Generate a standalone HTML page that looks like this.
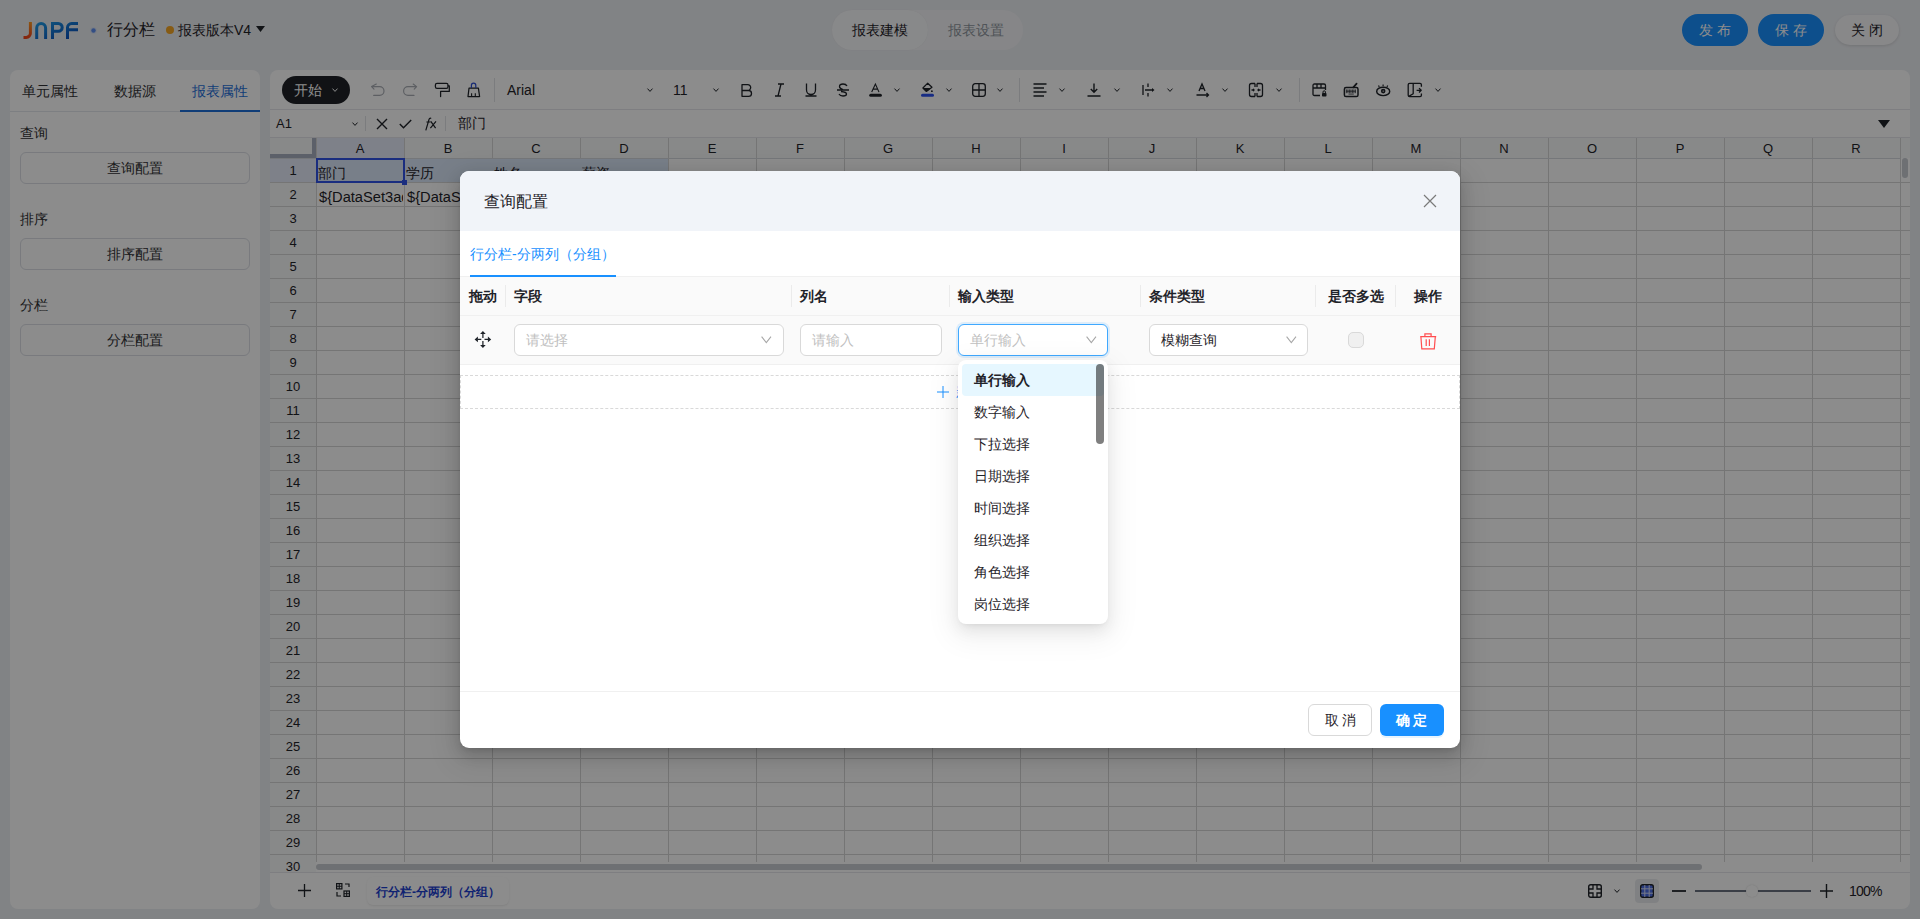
<!DOCTYPE html><html><head><meta charset="utf-8"><style>
*{box-sizing:border-box;margin:0;padding:0}
html,body{width:1920px;height:919px;overflow:hidden}
body{font-family:"Liberation Sans",sans-serif;font-size:14px;color:#303133;background:#eceef2;position:relative}
.abs{position:absolute}
.t{position:absolute;white-space:nowrap;line-height:1}
svg{position:absolute;overflow:visible}
</style></head><body>
<svg style="left:0;top:0" width="100" height="50" viewBox="0 0 100 50"><defs><linearGradient id="gj" x1="0" y1="0" x2="0" y2="1"><stop offset="0" stop-color="#ff9a1f"/><stop offset="1" stop-color="#f2461c"/></linearGradient><linearGradient id="gb" x1="0" y1="0" x2="1" y2="1"><stop offset="0" stop-color="#1f9be6"/><stop offset="1" stop-color="#0747b8"/></linearGradient></defs><path d="M30.4 22V33.2a4.2 4.2 0 0 1 -4.2 4.2H23.5" fill="none" stroke="url(#gj)" stroke-width="3"/><path d="M36.7 39V27.95a4.45 4.45 0 0 1 8.9 0V39M52.5 39V23.5H58.3a3.9 3.9 0 0 1 0 7.8H52.5M67.5 39V27.6a4.1 4.1 0 0 1 4.1 -4.1H78M67.5 29.8H78" fill="none" stroke="url(#gb)" stroke-width="3" gradientUnits="userSpaceOnUse"/><circle cx="93.5" cy="30.5" r="3.3" fill="#cfdcf5" opacity=".6"/><circle cx="93.5" cy="30.5" r="2.2" fill="#5d8ef0"/></svg>
<div class="t" style="left:107px;top:22px;font-size:16px;color:#1f2329">行分栏</div>
<div class="abs" style="left:166px;top:26px;width:8px;height:8px;border-radius:4px;background:#f5a623"></div>
<div class="t" style="left:178px;top:23px;font-size:14px;color:#1f2329">报表版本V4</div>
<svg style="left:256px;top:26px" width="9" height="7"><path d="M0 0H9L4.5 6Z" fill="#1f2329"/></svg>
<div class="abs" style="left:832px;top:10px;width:191px;height:40px;border-radius:20px;background:#f4f5f8"></div>
<div class="abs" style="left:832px;top:10px;width:96px;height:40px;border-radius:20px;background:#f8f9fb;box-shadow:0 0 1px rgba(0,0,0,.08)"></div>
<div class="t" style="left:852px;top:23px;color:#1f2329">报表建模</div>
<div class="t" style="left:948px;top:23px;color:#8f959e">报表设置</div>
<div class="abs" style="left:1682px;top:14px;width:66px;height:32px;border-radius:16px;background:#1890ff"></div>
<div class="t" style="left:1699px;top:23px;color:#fff;letter-spacing:4px">发布</div>
<div class="abs" style="left:1758px;top:14px;width:66px;height:32px;border-radius:16px;background:#1890ff"></div>
<div class="t" style="left:1775px;top:23px;color:#fff;letter-spacing:4px">保存</div>
<div class="abs" style="left:1835px;top:15px;width:64px;height:30px;border-radius:15px;background:#f7f8fa;box-shadow:0 1px 3px rgba(0,0,0,.12)"></div>
<div class="t" style="left:1851px;top:23px;color:#1f2329;letter-spacing:4px">关闭</div>
<div class="abs" style="left:10px;top:70px;width:250px;height:839px;border-radius:8px;background:#fff"></div>
<div class="abs" style="left:10px;top:111px;width:250px;height:1px;background:#e4e7ed"></div>
<div class="abs" style="left:180px;top:110px;width:80px;height:2px;background:#1e6fd9"></div>
<div class="t" style="left:22px;top:84px;color:#303133">单元属性</div>
<div class="t" style="left:114px;top:84px;color:#303133">数据源</div>
<div class="t" style="left:192px;top:84px;color:#1e6fd9">报表属性</div>
<div class="t" style="left:20px;top:126px;color:#303133">查询</div>
<div class="abs" style="left:20px;top:152px;width:230px;height:32px;border:1px solid #dcdfe6;border-radius:6px;background:#fff"></div>
<div class="t" style="left:107px;top:161px;color:#303133">查询配置</div>
<div class="t" style="left:20px;top:212px;color:#303133">排序</div>
<div class="abs" style="left:20px;top:238px;width:230px;height:32px;border:1px solid #dcdfe6;border-radius:6px;background:#fff"></div>
<div class="t" style="left:107px;top:247px;color:#303133">排序配置</div>
<div class="t" style="left:20px;top:298px;color:#303133">分栏</div>
<div class="abs" style="left:20px;top:324px;width:230px;height:32px;border:1px solid #dcdfe6;border-radius:6px;background:#fff"></div>
<div class="t" style="left:107px;top:333px;color:#303133">分栏配置</div>
<div class="abs" style="left:270px;top:70px;width:1640px;height:839px;border-radius:8px;background:#fff;overflow:hidden">
</div>
<div class="abs" style="left:270px;top:109px;width:1640px;height:1px;background:#e5e6eb"></div>
<div class="abs" style="left:270px;top:137px;width:1640px;height:1px;background:#e5e6eb"></div>
<div class="abs" style="left:282px;top:76px;width:68px;height:28px;border-radius:14px;background:#1f2227"></div>
<div class="t" style="left:294px;top:83px;color:#fff">开始</div>
<svg style="left:332px;top:88px" width="6" height="4"><path d="M0.5 0.6L3.0 3.4L5.5 0.6" fill="none" stroke="#fff" stroke-width="1"/></svg>
<svg style="left:364px;top:76px" width="124" height="28" viewBox="0 0 124 28"><path d="M12.3 8L7.6 10.6L10 13.2M7.8 10.6H15.6A4.4 4.4 0 0 1 15.6 19.4H9.7" fill="none" stroke="#a9adb4" stroke-width="1.15" stroke-linecap="round" stroke-linejoin="round"/><path d="M49.2 8L52.6 10.6L50.2 13.2M52.4 10.6H44A4.4 4.4 0 0 0 44 19.4H50" fill="none" stroke="#a9adb4" stroke-width="1.15" stroke-linecap="round" stroke-linejoin="round"/><rect x="71.4" y="7.4" width="12.6" height="4.9" rx="1.6" fill="none" stroke="#1f2329" stroke-width="1.25"/><path d="M84 9.8H85.3V15.4H76.6V20.6" fill="none" stroke="#1f2329" stroke-width="1.25" stroke-linecap="round" stroke-linejoin="round"/><path d="M105 12.2H114.4L115.6 20.5H104Z" fill="none" stroke="#1f2329" stroke-width="1.25" stroke-linejoin="round"/><path d="M107.6 17.3V20.5M111.3 17.3V20.5" stroke="#1f2329" stroke-width="1.1"/><path d="M107.4 12V9.4a2.2 2.2 0 0 1 4.4 0V12" fill="none" stroke="#2d4fd6" stroke-width="1.2"/></svg>
<div class="abs" style="left:494px;top:78px;width:1px;height:24px;background:#e0e2e6"></div>
<div class="t" style="left:507px;top:83px;font-size:14px;color:#1f2329">Arial</div>
<svg style="left:647px;top:88px" width="6" height="4"><path d="M0.5 0.6L3.0 3.4L5.5 0.6" fill="none" stroke="#1f2329" stroke-width="1"/></svg>
<div class="t" style="left:673px;top:83px;font-size:14px;color:#1f2329">11</div>
<svg style="left:713px;top:88px" width="6" height="4"><path d="M0.5 0.6L3.0 3.4L5.5 0.6" fill="none" stroke="#1f2329" stroke-width="1"/></svg>
<svg style="left:741px;top:84px" width="13" height="13" viewBox="0 0 13 13"><path d="M1 0.7H6.8a2.9 2.9 0 0 1 0 5.8H1ZM1 6.5H7.6a2.9 2.9 0 0 1 0 5.8H1Z" fill="none" stroke="#1f2329" stroke-width="1.3" stroke-linejoin="round"/></svg>
<svg style="left:774px;top:83px" width="11" height="14" viewBox="0 0 11 14"><path d="M4 1H10M1 13H7M7 1L4 13" fill="none" stroke="#1f2329" stroke-width="1.3"/></svg>
<svg style="left:805px;top:83px" width="12" height="14" viewBox="0 0 12 14"><path d="M1.5 0.5V7a4.5 4.5 0 0 0 9 0V0.5M0.5 13H11.5" fill="none" stroke="#1f2329" stroke-width="1.3"/></svg>
<svg style="left:837px;top:83px" width="12" height="14" viewBox="0 0 12 14"><path d="M10 3Q9 1 6 1Q2.5 1 2.5 3.5Q2.5 5.5 6 6.5M4 8.5Q9.5 9 9.5 11Q9.5 13 6 13Q3 13 2 11M0 7H12" fill="none" stroke="#1f2329" stroke-width="1.3"/></svg>
<svg style="left:869px;top:83px" width="14" height="15" viewBox="0 0 14 15"><path d="M2.7 9.1L6.4 1L10 9.1M4 6.1H8.8" fill="none" stroke="#1f2329" stroke-width="1.1"/><rect x="0.2" y="10.7" width="12.7" height="3.1" rx="1.5" fill="#1f2329"/></svg>
<svg style="left:894px;top:88px" width="6" height="4"><path d="M0.5 0.6L3.0 3.4L5.5 0.6" fill="none" stroke="#1f2329" stroke-width="1"/></svg>
<svg style="left:921px;top:82px" width="14" height="16" viewBox="0 0 14 16"><path d="M6.7 1.2L11 5.2L5.4 9.5L1.9 6Z" fill="none" stroke="#1f2329" stroke-width="1.2" stroke-linejoin="round"/><path d="M1.9 6.1L9.9 6.1L5.4 9.6Z" fill="#1f2329"/><circle cx="10.9" cy="9.2" r="0.9" fill="#1f2329"/><rect x="0" y="11.7" width="13" height="3.1" rx="1.5" fill="#2b50f0"/></svg>
<svg style="left:946px;top:88px" width="6" height="4"><path d="M0.5 0.6L3.0 3.4L5.5 0.6" fill="none" stroke="#1f2329" stroke-width="1"/></svg>
<svg style="left:972px;top:83px" width="14" height="14" viewBox="0 0 14 14"><rect x="0.7" y="0.7" width="12.6" height="12.6" rx="2.5" fill="none" stroke="#1f2329" stroke-width="1.3"/><path d="M7 1V13M1 7H13" stroke="#1f2329" stroke-width="1.3"/></svg>
<svg style="left:997px;top:88px" width="6" height="4"><path d="M0.5 0.6L3.0 3.4L5.5 0.6" fill="none" stroke="#1f2329" stroke-width="1"/></svg>
<div class="abs" style="left:1019px;top:78px;width:1px;height:24px;background:#e0e2e6"></div>
<svg style="left:1033px;top:83px" width="14" height="14" viewBox="0 0 14 14"><path d="M0.5 1H13.5M0.5 5H11M0.5 9H13.5M0.5 13H11" stroke="#1f2329" stroke-width="1.3"/></svg>
<svg style="left:1059px;top:88px" width="6" height="4"><path d="M0.5 0.6L3.0 3.4L5.5 0.6" fill="none" stroke="#1f2329" stroke-width="1"/></svg>
<svg style="left:1087px;top:83px" width="14" height="14" viewBox="0 0 14 14"><path d="M7 0.5V9M3.8 6L7 9.3L10.2 6M0.5 13H13.5" fill="none" stroke="#1f2329" stroke-width="1.4"/></svg>
<svg style="left:1114px;top:88px" width="6" height="4"><path d="M0.5 0.6L3.0 3.4L5.5 0.6" fill="none" stroke="#1f2329" stroke-width="1"/></svg>
<svg style="left:1142px;top:83px" width="13" height="14" viewBox="0 0 13 14"><path d="M1 2V12M6 0.5V4M6 10V13.5M3 7H11" fill="none" stroke="#1f2329" stroke-width="1.3"/><path d="M10 5L12.5 7L10 9Z" fill="#1f2329"/></svg>
<svg style="left:1167px;top:88px" width="6" height="4"><path d="M0.5 0.6L3.0 3.4L5.5 0.6" fill="none" stroke="#1f2329" stroke-width="1"/></svg>
<svg style="left:1196px;top:83px" width="14" height="15" viewBox="0 0 14 15"><path d="M3 8L6 1L9 8M4 5.5H8M0.5 12H12.5M10.5 10L12.5 12L10.5 14" fill="none" stroke="#1f2329" stroke-width="1.3"/></svg>
<svg style="left:1222px;top:88px" width="6" height="4"><path d="M0.5 0.6L3.0 3.4L5.5 0.6" fill="none" stroke="#1f2329" stroke-width="1"/></svg>
<svg style="left:1248px;top:82px" width="16" height="16" viewBox="0 0 16 16"><path d="M7 1.5H3.5Q1.5 1.5 1.5 3.5V12.5Q1.5 14.5 3.5 14.5H7M7 1.5V5M7 11V14.5M9 1.5H12.5Q14.5 1.5 14.5 3.5V12.5Q14.5 14.5 12.5 14.5H9M9 1.5V5M9 11V14.5M3.5 8H6M10 8H12.5" fill="none" stroke="#1f2329" stroke-width="1.3"/><path d="M7 8L5 6.3V9.7ZM9 8L11 6.3V9.7Z" fill="#1f2329"/></svg>
<svg style="left:1276px;top:88px" width="6" height="4"><path d="M0.5 0.6L3.0 3.4L5.5 0.6" fill="none" stroke="#1f2329" stroke-width="1"/></svg>
<div class="abs" style="left:1299px;top:78px;width:1px;height:24px;background:#e0e2e6"></div>
<svg style="left:1312px;top:83px" width="15" height="14" viewBox="0 0 15 14"><path d="M8 12.5H2.5Q1 12.5 1 11V2.5Q1 1 2.5 1H12Q13.5 1 13.5 2.5V7M1 5H13.5M5 1V5M9 1V5" fill="none" stroke="#1f2329" stroke-width="1.3"/><rect x="10" y="10" width="4.5" height="3.5" rx="0.8" fill="#1f2329"/><path d="M11 10V9a1.2 1.2 0 0 1 2.4 0V10" fill="none" stroke="#1f2329" stroke-width="1"/></svg>
<svg style="left:1343px;top:81px" width="17" height="17" viewBox="0 0 17 17"><rect x="1.4" y="6.6" width="13.6" height="9" rx="1.6" fill="none" stroke="#1f2329" stroke-width="1.5"/><path d="M3.4 8.4V12.2M4.9 8.4V12.2M6.4 8.4V12.2M7.9 8.4V12.2M9.4 8.4V12.2M10.9 8.4V12.2M12.4 8.4V12.2M3.2 10.2H12.8M5.5 13.1H10.8" stroke="#1f2329" stroke-width="0.75"/><path d="M10.3 6.4L13.6 2.6" stroke="#1f2329" stroke-width="1.7" stroke-linecap="round"/></svg>
<svg style="left:1375px;top:82px" width="16" height="16" viewBox="0 0 16 16"><ellipse cx="8.2" cy="9.4" rx="6.5" ry="4.2" fill="none" stroke="#1f2329" stroke-width="1.45"/><circle cx="8.2" cy="9.1" r="1.5" fill="none" stroke="#1f2329" stroke-width="1.6"/><path d="M4.3 4.9L3.5 3.5M8.1 4.2V2.4M11.9 4.9L12.7 3.5" stroke="#1f2329" stroke-width="1.2"/></svg>
<svg style="left:1407px;top:82px" width="16" height="16" viewBox="0 0 16 16"><path d="M14.4 4.8V2.8Q14.4 1.4 13 1.4H2.6Q1.2 1.4 1.2 2.8V13.2Q1.2 14.6 2.6 14.6H13Q14.4 14.6 14.4 13.2V11.4M6.2 1.4V11.8L1.8 14.4M9.6 8.3H14.2M12 6.1L14.2 8.3L12 10.5" fill="none" stroke="#1f2329" stroke-width="1.3" stroke-linejoin="round"/></svg>
<svg style="left:1435px;top:88px" width="6" height="4"><path d="M0.5 0.6L3.0 3.4L5.5 0.6" fill="none" stroke="#1f2329" stroke-width="1"/></svg>
<div class="t" style="left:276px;top:117px;font-size:13px;color:#1f2329">A1</div>
<svg style="left:352px;top:122px" width="6" height="4"><path d="M0.5 0.6L3.0 3.4L5.5 0.6" fill="none" stroke="#1f2329" stroke-width="1"/></svg>
<div class="abs" style="left:365px;top:116px;width:1px;height:15px;background:#e0e2e6"></div>
<svg style="left:376px;top:118px" width="12" height="12" viewBox="0 0 12 12"><path d="M1 1L11 11M11 1L1 11" stroke="#1f2329" stroke-width="1.4"/></svg>
<svg style="left:399px;top:119px" width="13" height="10" viewBox="0 0 13 10"><path d="M0.8 5L4.5 8.8L12.2 1" fill="none" stroke="#1f2329" stroke-width="1.4"/></svg>
<svg style="left:422px;top:116px" width="16" height="16" viewBox="0 0 16 16"><path d="M9.2 2.4Q7.8 1.6 7 3.5L3.8 14.4M4.4 6H8.4M8.8 5.4L13.6 12.2M14 5.4L8.4 12.2" fill="none" stroke="#1f2329" stroke-width="1.2"/></svg>
<div class="abs" style="left:445px;top:116px;width:1px;height:15px;background:#e0e2e6"></div>
<div class="t" style="left:458px;top:116px;font-size:14px;color:#1f2329">部门</div>
<svg style="left:1878px;top:120px" width="12" height="8"><path d="M0 0H12L6 8Z" fill="#1f2329"/></svg>
<div class="abs" style="left:270px;top:138px;width:1640px;height:20px;background:#f8f9fa"></div>
<div class="abs" style="left:270px;top:158px;width:46px;height:714px;background:#f8f9fa"></div>
<div class="abs" style="left:316px;top:138px;width:88px;height:20px;background:#e6ebfa"></div>
<div class="abs" style="left:270px;top:158px;width:46px;height:24px;background:#e6ebfa"></div>
<div class="abs" style="left:316px;top:158px;width:352px;height:24px;background:#dbe8f9"></div>
<div class="abs" style="left:316px;top:138px;width:1px;height:724px;background:#d6d6d6"></div>
<div class="abs" style="left:404px;top:138px;width:1px;height:20px;background:#d6d6d6"></div>
<div class="abs" style="left:404px;top:182px;width:1px;height:680px;background:#d6d6d6"></div>
<div class="abs" style="left:492px;top:138px;width:1px;height:20px;background:#d6d6d6"></div>
<div class="abs" style="left:492px;top:182px;width:1px;height:680px;background:#d6d6d6"></div>
<div class="abs" style="left:580px;top:138px;width:1px;height:20px;background:#d6d6d6"></div>
<div class="abs" style="left:580px;top:182px;width:1px;height:680px;background:#d6d6d6"></div>
<div class="abs" style="left:668px;top:138px;width:1px;height:724px;background:#d6d6d6"></div>
<div class="abs" style="left:756px;top:138px;width:1px;height:724px;background:#d6d6d6"></div>
<div class="abs" style="left:844px;top:138px;width:1px;height:724px;background:#d6d6d6"></div>
<div class="abs" style="left:932px;top:138px;width:1px;height:724px;background:#d6d6d6"></div>
<div class="abs" style="left:1020px;top:138px;width:1px;height:724px;background:#d6d6d6"></div>
<div class="abs" style="left:1108px;top:138px;width:1px;height:724px;background:#d6d6d6"></div>
<div class="abs" style="left:1196px;top:138px;width:1px;height:724px;background:#d6d6d6"></div>
<div class="abs" style="left:1284px;top:138px;width:1px;height:724px;background:#d6d6d6"></div>
<div class="abs" style="left:1372px;top:138px;width:1px;height:724px;background:#d6d6d6"></div>
<div class="abs" style="left:1460px;top:138px;width:1px;height:724px;background:#d6d6d6"></div>
<div class="abs" style="left:1548px;top:138px;width:1px;height:724px;background:#d6d6d6"></div>
<div class="abs" style="left:1636px;top:138px;width:1px;height:724px;background:#d6d6d6"></div>
<div class="abs" style="left:1724px;top:138px;width:1px;height:724px;background:#d6d6d6"></div>
<div class="abs" style="left:1812px;top:138px;width:1px;height:724px;background:#d6d6d6"></div>
<div class="abs" style="left:1900px;top:138px;width:1px;height:724px;background:#d6d6d6"></div>
<div class="abs" style="left:270px;top:182px;width:1640px;height:1px;background:#d6d6d6"></div>
<div class="abs" style="left:270px;top:206px;width:1640px;height:1px;background:#d6d6d6"></div>
<div class="abs" style="left:270px;top:230px;width:1640px;height:1px;background:#d6d6d6"></div>
<div class="abs" style="left:270px;top:254px;width:1640px;height:1px;background:#d6d6d6"></div>
<div class="abs" style="left:270px;top:278px;width:1640px;height:1px;background:#d6d6d6"></div>
<div class="abs" style="left:270px;top:302px;width:1640px;height:1px;background:#d6d6d6"></div>
<div class="abs" style="left:270px;top:326px;width:1640px;height:1px;background:#d6d6d6"></div>
<div class="abs" style="left:270px;top:350px;width:1640px;height:1px;background:#d6d6d6"></div>
<div class="abs" style="left:270px;top:374px;width:1640px;height:1px;background:#d6d6d6"></div>
<div class="abs" style="left:270px;top:398px;width:1640px;height:1px;background:#d6d6d6"></div>
<div class="abs" style="left:270px;top:422px;width:1640px;height:1px;background:#d6d6d6"></div>
<div class="abs" style="left:270px;top:446px;width:1640px;height:1px;background:#d6d6d6"></div>
<div class="abs" style="left:270px;top:470px;width:1640px;height:1px;background:#d6d6d6"></div>
<div class="abs" style="left:270px;top:494px;width:1640px;height:1px;background:#d6d6d6"></div>
<div class="abs" style="left:270px;top:518px;width:1640px;height:1px;background:#d6d6d6"></div>
<div class="abs" style="left:270px;top:542px;width:1640px;height:1px;background:#d6d6d6"></div>
<div class="abs" style="left:270px;top:566px;width:1640px;height:1px;background:#d6d6d6"></div>
<div class="abs" style="left:270px;top:590px;width:1640px;height:1px;background:#d6d6d6"></div>
<div class="abs" style="left:270px;top:614px;width:1640px;height:1px;background:#d6d6d6"></div>
<div class="abs" style="left:270px;top:638px;width:1640px;height:1px;background:#d6d6d6"></div>
<div class="abs" style="left:270px;top:662px;width:1640px;height:1px;background:#d6d6d6"></div>
<div class="abs" style="left:270px;top:686px;width:1640px;height:1px;background:#d6d6d6"></div>
<div class="abs" style="left:270px;top:710px;width:1640px;height:1px;background:#d6d6d6"></div>
<div class="abs" style="left:270px;top:734px;width:1640px;height:1px;background:#d6d6d6"></div>
<div class="abs" style="left:270px;top:758px;width:1640px;height:1px;background:#d6d6d6"></div>
<div class="abs" style="left:270px;top:782px;width:1640px;height:1px;background:#d6d6d6"></div>
<div class="abs" style="left:270px;top:806px;width:1640px;height:1px;background:#d6d6d6"></div>
<div class="abs" style="left:270px;top:830px;width:1640px;height:1px;background:#d6d6d6"></div>
<div class="abs" style="left:270px;top:854px;width:1640px;height:1px;background:#d6d6d6"></div>
<div class="abs" style="left:270px;top:158px;width:1630px;height:1px;background:#d6d9de"></div>
<div class="abs" style="left:312px;top:138px;width:4px;height:20px;background:#a8b0c0"></div>
<div class="abs" style="left:270px;top:154px;width:46px;height:4px;background:#a8b0c0"></div>
<div class="t" style="left:340.0px;width:40px;text-align:center;top:142px;font-size:13px;color:#1f2329">A</div>
<div class="t" style="left:428.0px;width:40px;text-align:center;top:142px;font-size:13px;color:#1f2329">B</div>
<div class="t" style="left:516.0px;width:40px;text-align:center;top:142px;font-size:13px;color:#1f2329">C</div>
<div class="t" style="left:604.0px;width:40px;text-align:center;top:142px;font-size:13px;color:#1f2329">D</div>
<div class="t" style="left:692.0px;width:40px;text-align:center;top:142px;font-size:13px;color:#1f2329">E</div>
<div class="t" style="left:780.0px;width:40px;text-align:center;top:142px;font-size:13px;color:#1f2329">F</div>
<div class="t" style="left:868.0px;width:40px;text-align:center;top:142px;font-size:13px;color:#1f2329">G</div>
<div class="t" style="left:956.0px;width:40px;text-align:center;top:142px;font-size:13px;color:#1f2329">H</div>
<div class="t" style="left:1044.0px;width:40px;text-align:center;top:142px;font-size:13px;color:#1f2329">I</div>
<div class="t" style="left:1132.0px;width:40px;text-align:center;top:142px;font-size:13px;color:#1f2329">J</div>
<div class="t" style="left:1220.0px;width:40px;text-align:center;top:142px;font-size:13px;color:#1f2329">K</div>
<div class="t" style="left:1308.0px;width:40px;text-align:center;top:142px;font-size:13px;color:#1f2329">L</div>
<div class="t" style="left:1396.0px;width:40px;text-align:center;top:142px;font-size:13px;color:#1f2329">M</div>
<div class="t" style="left:1484.0px;width:40px;text-align:center;top:142px;font-size:13px;color:#1f2329">N</div>
<div class="t" style="left:1572.0px;width:40px;text-align:center;top:142px;font-size:13px;color:#1f2329">O</div>
<div class="t" style="left:1660.0px;width:40px;text-align:center;top:142px;font-size:13px;color:#1f2329">P</div>
<div class="t" style="left:1748.0px;width:40px;text-align:center;top:142px;font-size:13px;color:#1f2329">Q</div>
<div class="t" style="left:1836.0px;width:40px;text-align:center;top:142px;font-size:13px;color:#1f2329">R</div>
<div class="t" style="left:270px;width:46px;text-align:center;top:164px;font-size:13px;color:#1f2329">1</div>
<div class="t" style="left:270px;width:46px;text-align:center;top:188px;font-size:13px;color:#1f2329">2</div>
<div class="t" style="left:270px;width:46px;text-align:center;top:212px;font-size:13px;color:#1f2329">3</div>
<div class="t" style="left:270px;width:46px;text-align:center;top:236px;font-size:13px;color:#1f2329">4</div>
<div class="t" style="left:270px;width:46px;text-align:center;top:260px;font-size:13px;color:#1f2329">5</div>
<div class="t" style="left:270px;width:46px;text-align:center;top:284px;font-size:13px;color:#1f2329">6</div>
<div class="t" style="left:270px;width:46px;text-align:center;top:308px;font-size:13px;color:#1f2329">7</div>
<div class="t" style="left:270px;width:46px;text-align:center;top:332px;font-size:13px;color:#1f2329">8</div>
<div class="t" style="left:270px;width:46px;text-align:center;top:356px;font-size:13px;color:#1f2329">9</div>
<div class="t" style="left:270px;width:46px;text-align:center;top:380px;font-size:13px;color:#1f2329">10</div>
<div class="t" style="left:270px;width:46px;text-align:center;top:404px;font-size:13px;color:#1f2329">11</div>
<div class="t" style="left:270px;width:46px;text-align:center;top:428px;font-size:13px;color:#1f2329">12</div>
<div class="t" style="left:270px;width:46px;text-align:center;top:452px;font-size:13px;color:#1f2329">13</div>
<div class="t" style="left:270px;width:46px;text-align:center;top:476px;font-size:13px;color:#1f2329">14</div>
<div class="t" style="left:270px;width:46px;text-align:center;top:500px;font-size:13px;color:#1f2329">15</div>
<div class="t" style="left:270px;width:46px;text-align:center;top:524px;font-size:13px;color:#1f2329">16</div>
<div class="t" style="left:270px;width:46px;text-align:center;top:548px;font-size:13px;color:#1f2329">17</div>
<div class="t" style="left:270px;width:46px;text-align:center;top:572px;font-size:13px;color:#1f2329">18</div>
<div class="t" style="left:270px;width:46px;text-align:center;top:596px;font-size:13px;color:#1f2329">19</div>
<div class="t" style="left:270px;width:46px;text-align:center;top:620px;font-size:13px;color:#1f2329">20</div>
<div class="t" style="left:270px;width:46px;text-align:center;top:644px;font-size:13px;color:#1f2329">21</div>
<div class="t" style="left:270px;width:46px;text-align:center;top:668px;font-size:13px;color:#1f2329">22</div>
<div class="t" style="left:270px;width:46px;text-align:center;top:692px;font-size:13px;color:#1f2329">23</div>
<div class="t" style="left:270px;width:46px;text-align:center;top:716px;font-size:13px;color:#1f2329">24</div>
<div class="t" style="left:270px;width:46px;text-align:center;top:740px;font-size:13px;color:#1f2329">25</div>
<div class="t" style="left:270px;width:46px;text-align:center;top:764px;font-size:13px;color:#1f2329">26</div>
<div class="t" style="left:270px;width:46px;text-align:center;top:788px;font-size:13px;color:#1f2329">27</div>
<div class="t" style="left:270px;width:46px;text-align:center;top:812px;font-size:13px;color:#1f2329">28</div>
<div class="t" style="left:270px;width:46px;text-align:center;top:836px;font-size:13px;color:#1f2329">29</div>
<div class="t" style="left:270px;width:46px;text-align:center;top:860px;font-size:13px;color:#1f2329">30</div>
<div class="t" style="left:318px;top:167px;font-size:13.5px;color:#1f2329">部门</div>
<div class="t" style="left:406px;top:167px;font-size:13.5px;color:#1f2329">学历</div>
<div class="t" style="left:494px;top:167px;font-size:13.5px;color:#1f2329">姓名</div>
<div class="t" style="left:582px;top:167px;font-size:13.5px;color:#1f2329">薪资</div>
<div class="abs" style="left:318px;top:189px;width:85px;height:18px;overflow:hidden"><div class="t" style="left:1px;top:1px;font-size:14.67px;color:#1f2329">${DataSet3ad.dept}</div></div>
<div class="abs" style="left:406px;top:189px;width:85px;height:18px;overflow:hidden"><div class="t" style="left:1px;top:1px;font-size:14.67px;color:#1f2329">${DataSet3abc.edu}</div></div>
<div class="abs" style="left:316px;top:158px;width:89px;height:25px;border:2px solid #3152e8"></div>
<div class="abs" style="left:402px;top:180px;width:5px;height:5px;background:#3152e8"></div>
<div class="abs" style="left:316px;top:864px;width:1386px;height:6px;border-radius:3px;background:#c9ccd1"></div>
<div class="abs" style="left:1902px;top:158px;width:6px;height:20px;border-radius:3px;background:#c9ccd1"></div>
<div class="abs" style="left:270px;top:872px;width:1640px;height:1px;background:#e5e6eb"></div>
<svg style="left:298px;top:884px" width="13" height="13" viewBox="0 0 13 13"><path d="M6.5 0V13M0 6.5H13" stroke="#1f2329" stroke-width="1.3"/></svg>
<svg style="left:336px;top:883px" width="14" height="14" viewBox="0 0 14 14"><rect x="0.6" y="0.6" width="5.3" height="5.3" fill="none" stroke="#1f2329" stroke-width="1.2"/><path d="M3.25 0.6V5.9M0.6 3.25H5.9" stroke="#1f2329" stroke-width="1"/><rect x="8" y="8" width="5.4" height="5.4" fill="none" stroke="#1f2329" stroke-width="1.2"/><path d="M10.7 8V13.4M8 10.7H13.4" stroke="#1f2329" stroke-width="1"/><path d="M9 1H13V4M1 9V13H5" fill="none" stroke="#1f2329" stroke-width="1.2"/></svg>
<div class="abs" style="left:367px;top:877px;width:142px;height:28px;border-radius:6px;background:#fff;box-shadow:0 1px 2px rgba(0,0,0,.08)"></div>
<div class="t" style="left:376px;top:886px;font-size:12px;font-weight:bold;color:#1d3fcf">行分栏-分两列（分组）</div>
<svg style="left:1588px;top:884px" width="14" height="14" viewBox="0 0 14 14"><rect x="0.7" y="0.7" width="12.6" height="12.6" rx="2" fill="none" stroke="#1f2329" stroke-width="1.4"/><path d="M5 1V5H1M9 1V5H13M5 13V9H1M9 13V9H13" fill="none" stroke="#1f2329" stroke-width="1.3"/></svg>
<svg style="left:1614px;top:889px" width="6" height="4"><path d="M0.5 0.6L3.0 3.4L5.5 0.6" fill="none" stroke="#1f2329" stroke-width="1"/></svg>
<div class="abs" style="left:1635px;top:879px;width:24px;height:24px;border-radius:4px;background:#eaecef"></div>
<svg style="left:1640px;top:884px" width="14" height="14" viewBox="0 0 14 14"><rect x="0.7" y="0.7" width="12.6" height="12.6" rx="2" fill="#4d6de6" stroke="#1f2329" stroke-width="1.4"/><path d="M4.8 1V13M9.2 1V13M1 4.8H13M1 9.2H13" stroke="#d5ddf7" stroke-width="1"/></svg>
<div class="abs" style="left:1672px;top:890px;width:14px;height:2px;background:#3a3d42"></div>
<div class="abs" style="left:1695px;top:890px;width:116px;height:2px;background:#6b7280"></div>
<div class="abs" style="left:1746px;top:885px;width:12px;height:12px;border-radius:6px;background:#fff;box-shadow:0 0 2px rgba(0,0,0,.15)"></div>
<svg style="left:1820px;top:884px" width="13" height="14" viewBox="0 0 13 14"><path d="M6.5 0V14M0 7H13" stroke="#1f2329" stroke-width="1.4"/></svg>
<div class="t" style="left:1849px;top:884px;font-size:14px;letter-spacing:-0.8px;color:#1f2329">100%</div>
<div class="abs" style="left:0;top:0;width:1920px;height:919px;background:rgba(0,0,0,.45)"></div>
<div class="abs" style="left:460px;top:171px;width:1000px;height:577px;border-radius:9px;background:#fff;overflow:hidden;box-shadow:0 6px 16px rgba(0,0,0,.16),0 3px 6px -4px rgba(0,0,0,.2),0 9px 28px 8px rgba(0,0,0,.08)">
<div class="abs" style="left:0;top:0;width:1000px;height:60px;background:#f1f4f9"></div>
<div class="t" style="left:24px;top:23px;font-size:16px;color:#1f2329">查询配置</div>
<svg style="left:963px;top:23px" width="14" height="14" viewBox="0 0 14 14"><path d="M1 1L13 13M13 1L1 13" stroke="#7a7a7a" stroke-width="1.2"/></svg>
<div class="t" style="left:10px;top:76px;font-size:14px;color:#1890ff">行分栏-分两列（分组）</div>
<div class="abs" style="left:0;top:105px;width:1000px;height:1px;background:#f0f0f0"></div>
<div class="abs" style="left:10px;top:104px;width:146px;height:2px;background:#1890ff"></div>
<div class="abs" style="left:0;top:106px;width:1000px;height:39px;background:#fafafa;border-bottom:1px solid #f0f0f0"></div>
<div class="abs" style="left:45px;top:114px;width:1px;height:22px;background:#ebebeb"></div>
<div class="abs" style="left:331px;top:114px;width:1px;height:22px;background:#ebebeb"></div>
<div class="abs" style="left:489px;top:114px;width:1px;height:22px;background:#ebebeb"></div>
<div class="abs" style="left:680px;top:114px;width:1px;height:22px;background:#ebebeb"></div>
<div class="abs" style="left:855px;top:114px;width:1px;height:22px;background:#ebebeb"></div>
<div class="abs" style="left:935px;top:114px;width:1px;height:22px;background:#ebebeb"></div>
<div class="t" style="left:9px;top:118px;font-size:14px;font-weight:bold;color:#1f2329">拖动</div>
<div class="t" style="left:54px;top:118px;font-size:14px;font-weight:bold;color:#1f2329">字段</div>
<div class="t" style="left:340px;top:118px;font-size:14px;font-weight:bold;color:#1f2329">列名</div>
<div class="t" style="left:498px;top:118px;font-size:14px;font-weight:bold;color:#1f2329">输入类型</div>
<div class="t" style="left:689px;top:118px;font-size:14px;font-weight:bold;color:#1f2329">条件类型</div>
<div class="t" style="left:868px;top:118px;font-size:14px;font-weight:bold;color:#1f2329">是否多选</div>
<div class="t" style="left:954px;top:118px;font-size:14px;font-weight:bold;color:#1f2329">操作</div>
<div class="abs" style="left:0;top:145px;width:1000px;height:49px;background:#fafafa;border-bottom:1px solid #f0f0f0"></div>
<svg style="left:10px;top:157px" width="26" height="24" viewBox="0 0 26 24"><path d="M12.9 5.4V9.9M12.9 12.9V17.4M7.6 11.4H11.3M14.5 11.4H18.2" stroke="#1f2329" stroke-width="1.25"/><path d="M10.1 5.9L12.9 2.9L15.7 5.9ZM10.1 16.9L12.9 19.9L15.7 16.9ZM7.9 8.6L4.6 11.4L7.9 14.2ZM17.9 8.6L21.2 11.4L17.9 14.2Z" fill="#1f2329"/></svg>
<div class="abs" style="left:54px;top:153px;width:270px;height:32px;border:1px solid #d9d9d9;border-radius:6px;background:#fff"></div>
<div class="t" style="left:66px;top:162px;font-size:14px;color:#bfbfbf">请选择</div>
<svg style="left:301px;top:165px" width="11" height="8" viewBox="0 0 11 8"><path d="M0.6 0.6L5.3 6.6L10 0.6" fill="none" stroke="#a6a6a6" stroke-width="1.05"/></svg>
<div class="abs" style="left:340px;top:153px;width:142px;height:32px;border:1px solid #d9d9d9;border-radius:6px;background:#fff"></div>
<div class="t" style="left:352px;top:162px;font-size:14px;color:#bfbfbf">请输入</div>
<div class="abs" style="left:498px;top:153px;width:150px;height:32px;border:1px solid #40a9ff;border-radius:6px;background:#fff;box-shadow:0 0 0 2px rgba(24,144,255,.12)"></div>
<div class="t" style="left:510px;top:162px;font-size:14px;color:#bfbfbf">单行输入</div>
<svg style="left:626px;top:165px" width="11" height="8" viewBox="0 0 11 8"><path d="M0.6 0.6L5.3 6.6L10 0.6" fill="none" stroke="#a6a6a6" stroke-width="1.05"/></svg>
<div class="abs" style="left:689px;top:153px;width:159px;height:32px;border:1px solid #d9d9d9;border-radius:6px;background:#fff"></div>
<div class="t" style="left:701px;top:162px;font-size:14px;color:#1f2329">模糊查询</div>
<svg style="left:826px;top:165px" width="11" height="8" viewBox="0 0 11 8"><path d="M0.6 0.6L5.3 6.6L10 0.6" fill="none" stroke="#a6a6a6" stroke-width="1.05"/></svg>
<div class="abs" style="left:888px;top:161px;width:16px;height:16px;border:1px solid #d9d9d9;border-radius:5px;background:#f0f0f0"></div>
<svg style="left:960px;top:162px" width="17" height="17" viewBox="0 0 17 17"><path d="M4.9 3.4V0.9H11.1V3.4M0.2 3.7H16.2M0.9 3.7L1.8 15.8H14.3L15.3 3.7M6.2 6.3V12.9M9.4 6.3V12.9" fill="none" stroke="#ff4d4f" stroke-width="1.2"/></svg>
<div class="abs" style="left:0;top:204px;width:1000px;height:34px;border:1px dashed #d9d9d9"></div>
<svg style="left:477px;top:215px" width="12" height="12" viewBox="0 0 12 12"><path d="M6 0V12M0 6H12" stroke="#1890ff" stroke-width="1"/></svg>
<div class="t" style="left:496px;top:214px;font-size:14px;color:#1890ff">新增</div>
<div class="abs" style="left:0;top:520px;width:1000px;height:1px;background:#f0f0f0"></div>
<div class="abs" style="left:848px;top:533px;width:64px;height:32px;border:1px solid #d9d9d9;border-radius:6px;background:#fff"></div>
<div class="t" style="left:865px;top:542px;font-size:14px;color:#1f2329;letter-spacing:3px">取消</div>
<div class="abs" style="left:920px;top:533px;width:64px;height:32px;border-radius:6px;background:#1890ff;box-shadow:0 2px 0 rgba(5,145,255,.1)"></div>
<div class="t" style="left:936px;top:542px;font-size:14px;color:#fff;font-weight:bold;letter-spacing:3px">确定</div>
</div>
<div class="abs" style="left:958px;top:360px;width:150px;height:264px;border-radius:8px;background:#fff;box-shadow:0 6px 16px rgba(0,0,0,.08),0 3px 6px -4px rgba(0,0,0,.12),0 9px 28px 8px rgba(0,0,0,.05)"></div>
<div class="abs" style="left:962px;top:364px;width:142px;height:32px;border-radius:4px;background:#e6f7ff"></div>
<div class="t" style="left:974px;top:373px;font-size:14px;color:#1f2329;font-weight:bold">单行输入</div>
<div class="t" style="left:974px;top:405px;font-size:14px;color:#1f2329;font-weight:normal">数字输入</div>
<div class="t" style="left:974px;top:437px;font-size:14px;color:#1f2329;font-weight:normal">下拉选择</div>
<div class="t" style="left:974px;top:469px;font-size:14px;color:#1f2329;font-weight:normal">日期选择</div>
<div class="t" style="left:974px;top:501px;font-size:14px;color:#1f2329;font-weight:normal">时间选择</div>
<div class="t" style="left:974px;top:533px;font-size:14px;color:#1f2329;font-weight:normal">组织选择</div>
<div class="t" style="left:974px;top:565px;font-size:14px;color:#1f2329;font-weight:normal">角色选择</div>
<div class="t" style="left:974px;top:597px;font-size:14px;color:#1f2329;font-weight:normal">岗位选择</div>
<div class="abs" style="left:1096px;top:364px;width:8px;height:80px;border-radius:4px;background:rgba(0,0,0,.5)"></div>
</body></html>
